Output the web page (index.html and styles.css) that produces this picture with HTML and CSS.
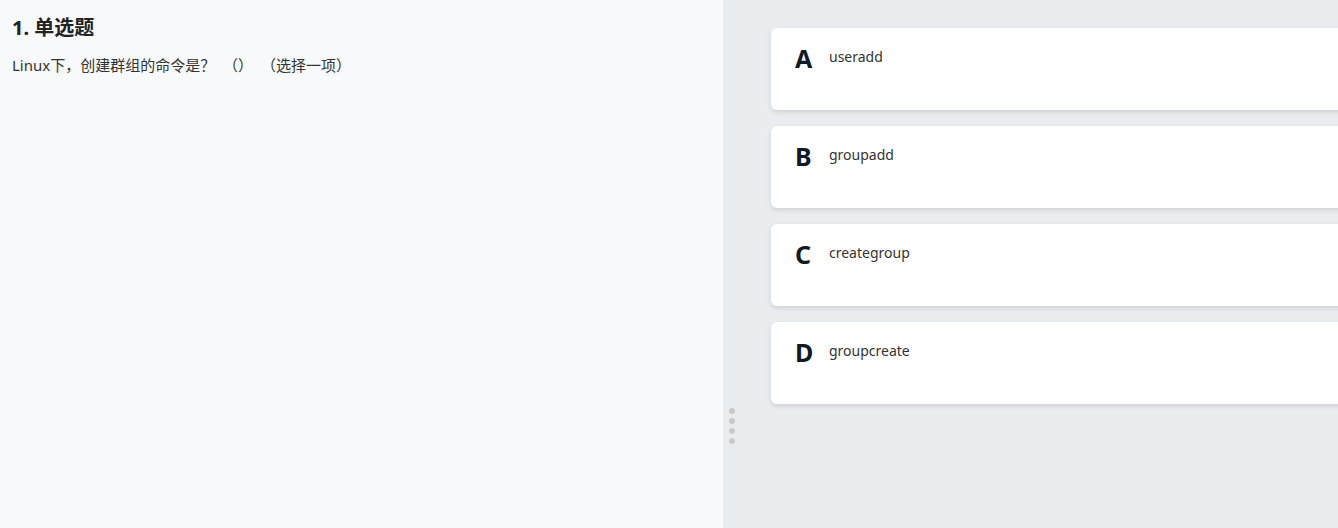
FILE: index.html
```html
<!DOCTYPE html>
<html lang="zh">
<head>
<meta charset="utf-8">
<link rel="stylesheet" href="styles.css">
</head>
<body>
<div class="page">
  <section class="question">
    <h2 class="q-title">1. 单选题</h2>
    <p class="q-text">Linux下，创建群组的命令是？ （） （选择一项）</p>
  </section>
  <div class="splitter">
    <span class="dot"></span><span class="dot"></span><span class="dot"></span><span class="dot"></span>
  </div>
  <section class="options">
    <div class="card"><span class="letter">A</span><span class="opt">useradd</span></div>
    <div class="card"><span class="letter">B</span><span class="opt">groupadd</span></div>
    <div class="card"><span class="letter">C</span><span class="opt">creategroup</span></div>
    <div class="card"><span class="letter">D</span><span class="opt">groupcreate</span></div>
  </section>
</div>
</body>
</html>
```

FILE: styles.css
```css
html, body {
  margin: 0;
  padding: 0;
  height: 100%;
  overflow: hidden;
}
body {
  font-family: "Noto Sans", "Noto Sans CJK SC", sans-serif;
  color: #262626;
}
.page {
  display: flex;
  height: 528px;
  width: 1338px;
}
.question {
  width: 723px;
  flex: none;
  background: #f8f9fb;
  padding: 13px 12px;
  box-sizing: border-box;
}
.q-title {
  margin: 0;
  font-size: 20px;
  font-weight: 700;
  line-height: 30px;
  color: #222;
}
.q-text {
  margin: 10px 0 0;
  font-size: 15px;
  line-height: 24px;
  color: #333;
  word-spacing: 4px;
}
.splitter {
  width: 48px;
  flex: none;
  background: #eaedf0;
  display: flex;
  flex-direction: column;
  align-items: flex-start;
  padding: 408px 0 0 6px;
  box-sizing: border-box;
  gap: 4px;
}
.dot {
  width: 6px;
  height: 6px;
  border-radius: 50%;
  background: #c9cacc;
}
.options {
  flex: 1;
  background: #eaedf0;
  padding-top: 28px;
  display: flex;
  flex-direction: column;
  gap: 16px;
  min-width: 0;
}
.card {
  background: #fff;
  border-radius: 6px 0 0 6px;
  height: 82px;
  box-shadow: 0 2px 5px rgba(0, 0, 0, 0.12);
  display: flex;
  align-items: flex-start;
  padding: 14px 0 0 24px;
  box-sizing: border-box;
  margin-right: -10px;
}
.letter {
  font-size: 25px;
  font-weight: 700;
  line-height: 33px;
  width: 34px;
  color: #111a24;
}
.opt {
  font-size: 14px;
  line-height: 30px;
  color: #333;
}
```
